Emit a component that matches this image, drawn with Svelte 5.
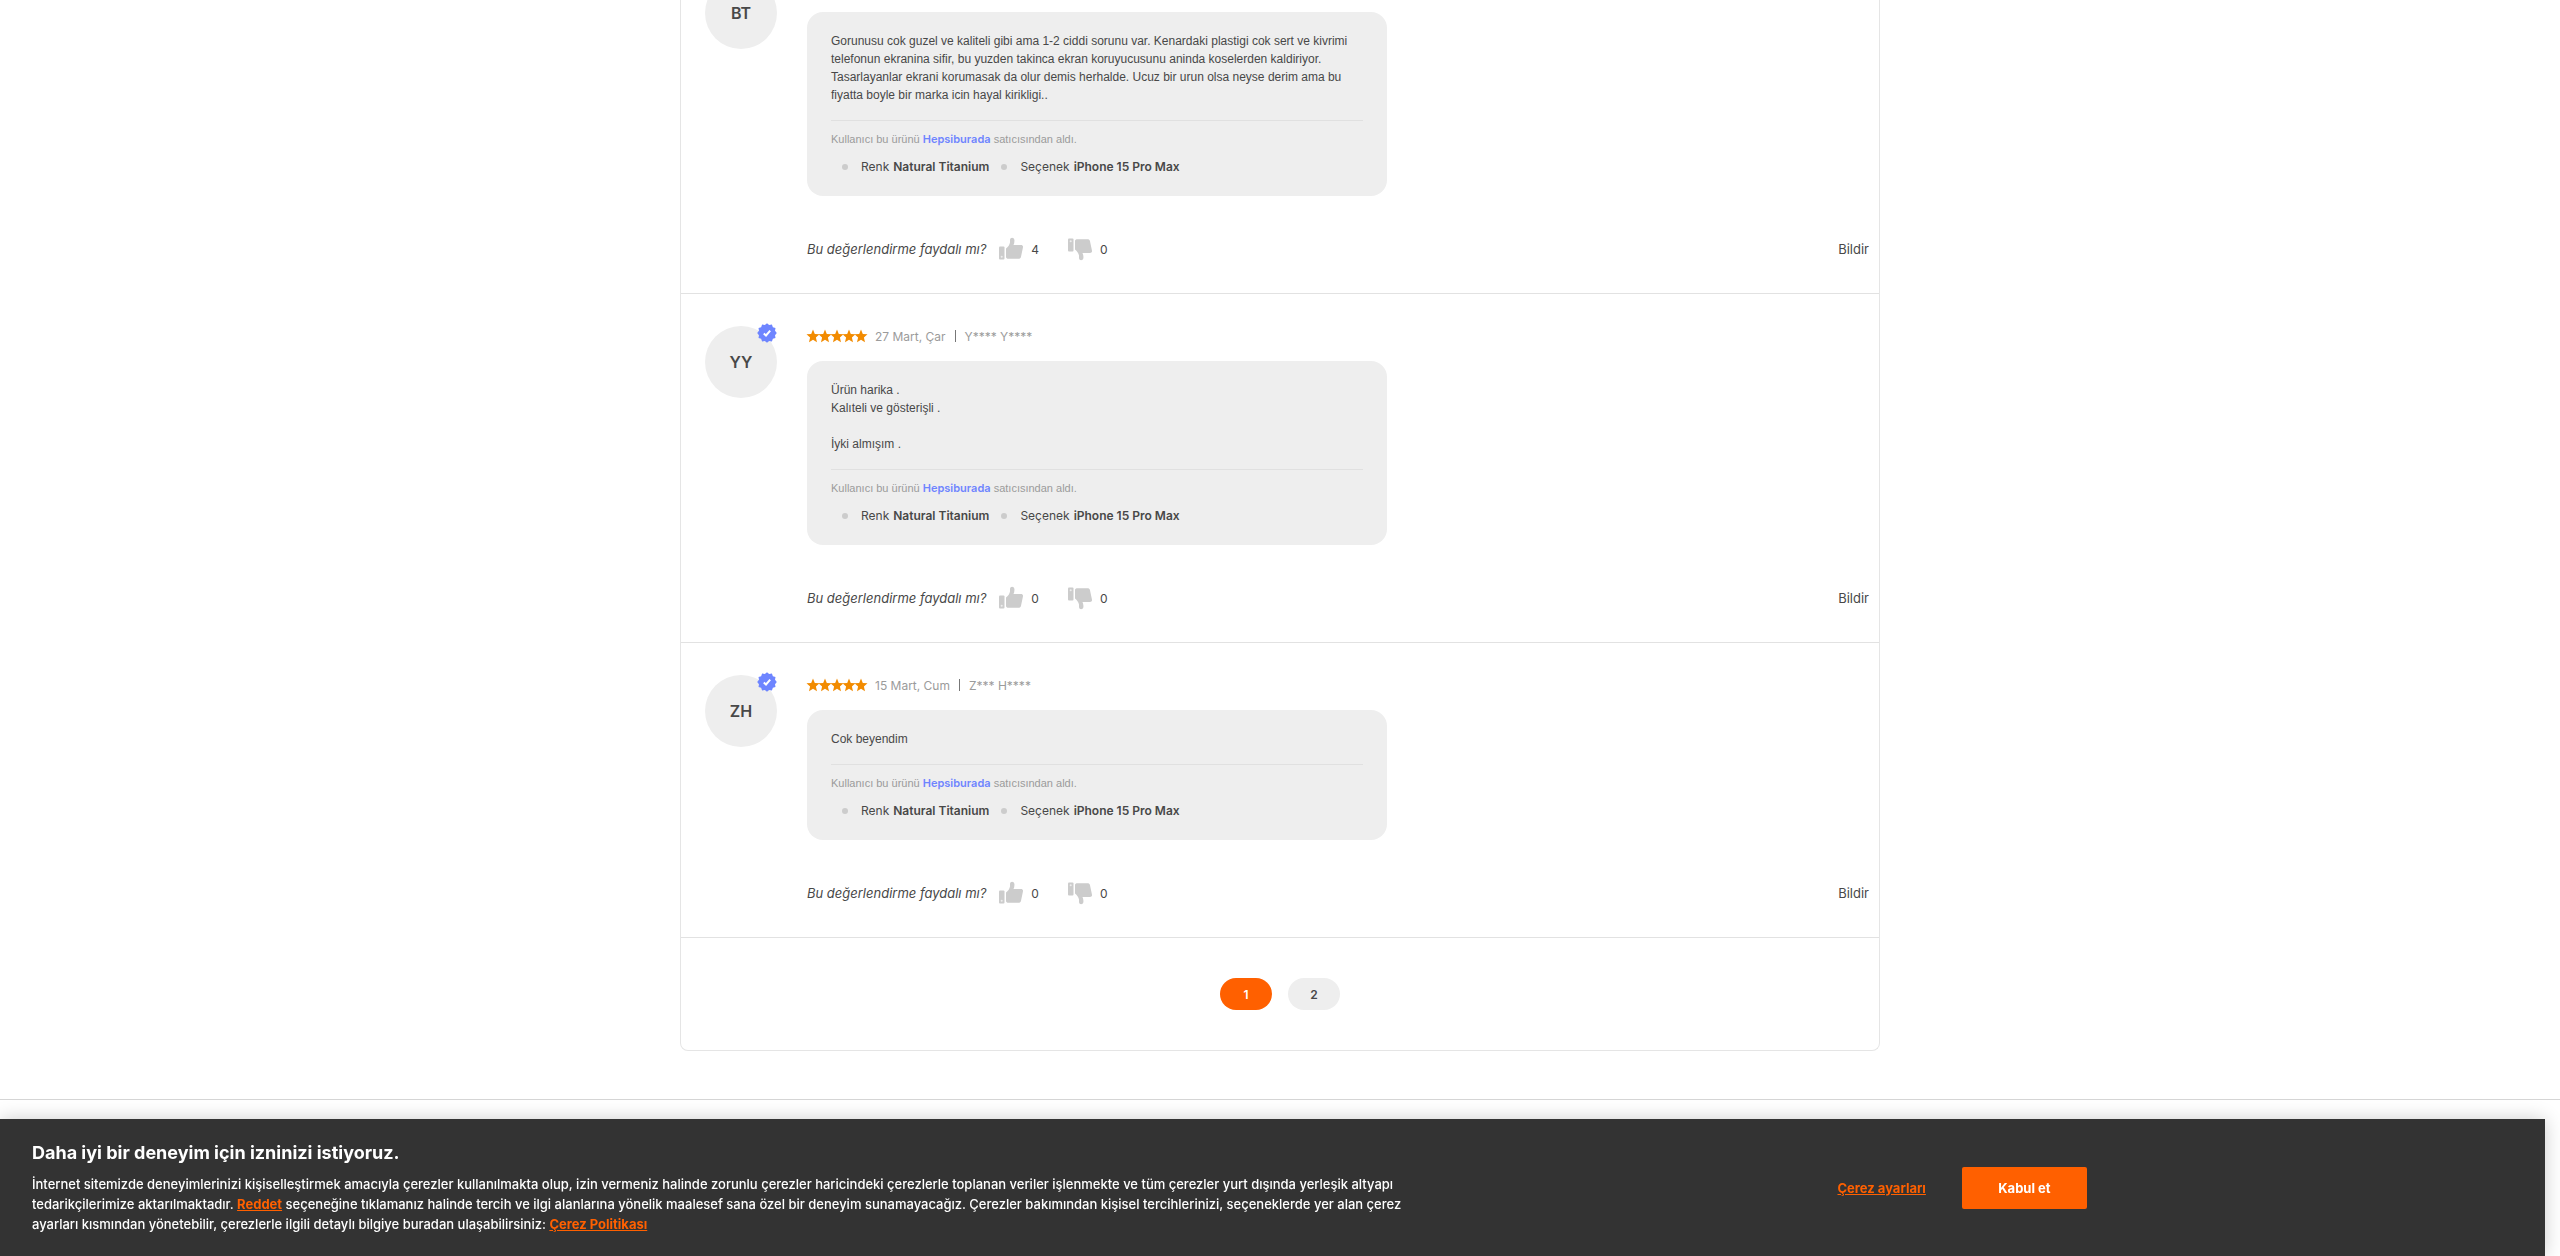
<script lang="ts">
  interface Review {
    initials: string;
    date?: string;
    author?: string;
    text: string;
    up: number;
    down: number;
  }

  const reviews: Review[] = [
    {
      initials: 'BT',
      text: 'Gorunusu cok guzel ve kaliteli gibi ama 1-2 ciddi sorunu var. Kenardaki plastigi cok sert ve kivrimi\ntelefonun ekranina sifir, bu yuzden takinca ekran koruyucusunu aninda koselerden kaldiriyor.\nTasarlayanlar ekrani korumasak da olur demis herhalde. Ucuz bir urun olsa neyse derim ama bu\nfiyatta boyle bir marka icin hayal kirikligi..',
      up: 4,
      down: 0,
    },
    {
      initials: 'YY',
      date: '27 Mart, Çar',
      author: 'Y**** Y****',
      text: 'Ürün harika .\nKalıteli ve gösterişli .\n\nİyki almışım .',
      up: 0,
      down: 0,
    },
    {
      initials: 'ZH',
      date: '15 Mart, Cum',
      author: 'Z*** H****',
      text: 'Cok beyendim',
      up: 0,
      down: 0,
    },
  ];

  const attributes = [
    { name: 'Renk', value: 'Natural Titanium' },
    { name: 'Seçenek', value: 'iPhone 15 Pro Max' },
  ];

  // Twelve-lobed seal outline, alternating outer and inner radius.
  const seal = Array.from({ length: 24 }, (_, i) => {
    const radius = i % 2 ? 8.3 : 9.8;
    const angle = (i * Math.PI) / 12;
    return `${(10 + radius * Math.sin(angle)).toFixed(2)},${(10 - radius * Math.cos(angle)).toFixed(2)}`;
  }).join(' ');

  let page = $state(1);
</script>

{#snippet star()}
  <svg class="star" viewBox="0 0 12 12" aria-hidden="true">
    <path d="M6-.5l1.800 4.400 4.700.4-3.600 3.100 1.100 4.800L6 9.700 2 12.200l1.100-4.800L-.5 4.300l4.700-.4z" />
  </svg>
{/snippet}

<main>
  <section class="card">
    {#each reviews as review}
      <article class="review">
        <div class="avatar">
          {review.initials}
          {#if review.date}
            <svg class="badge" viewBox="0 0 20 20" aria-hidden="true">
              <polygon class="seal" points={seal} />
              <path class="tick" d="M6.800 10.500l2.200 2 4.200-4.800" />
            </svg>
          {/if}
        </div>
        <div class="content">
          <header>
            {#if review.date}
              <span class="stars" role="img" aria-label="5 yıldız">
                {#each Array(5) as _}{@render star()}{/each}
              </span>
              <span>{review.date}</span>
              <span class="bar"></span>
              <span>{review.author}</span>
            {/if}
          </header>
          <div class="bubble">
            <p class="text">{review.text}</p>
            <p class="seller">Kullanıcı bu ürünü <a href="#hepsiburada">Hepsiburada</a> satıcısından aldı.</p>
            <ul>
              {#each attributes as attribute}
                <li>{attribute.name} <strong>{attribute.value}</strong></li>
              {/each}
            </ul>
          </div>
          <footer>
            <em>Bu değerlendirme faydalı mı?</em>
            <button class="vote" type="button" aria-label="Faydalı: {review.up}">
              <svg viewBox="0 0 24 24" aria-hidden="true">
                <path d="M1 9.500h3.500q1 0 1 1V21.500q0 1-1 1H1q-1 0-1-1V10.500q0-1 1-1z" />
                <circle class="hole" cx="2.700" cy="19.700" r="1" />
                <path d="M7 11.500C9 10 10.500 8 11 5.500V3C11.200 0 15 0 15.400 3c.2 2-.3 3.500-.9 5H22c1.500 0 2.200 1 2 2.300l-2 9.500c-.3 1.400-1.200 2-2.500 2H9.500C8 21.800 7 21.200 7 20z" />
              </svg>
              <span>{review.up}</span>
            </button>
            <button class="vote" type="button" aria-label="Faydalı değil: {review.down}">
              <svg viewBox="0 0 24 24" aria-hidden="true">
                <path d="M1 1.500h3.500q1 0 1 1V13.500q0 1-1 1H1q-1 0-1-1V2.500q0-1 1-1z" />
                <circle class="hole" cx="2.700" cy="4.300" r="1" />
                <path d="M7 12.500C9 14 10.500 16 11 18.500V21C11.200 24 15 24 15.400 21c.2-2-.3-3.500-.9-5H22c1.500 0 2.200-1 2-2.300L22 4.200c-.3-1.400-1.200-2-2.500-2H9.500C8 2.200 7 2.800 7 4z" />
              </svg>
              <span>{review.down}</span>
            </button>
            <button class="report" type="button">Bildir</button>
          </footer>
        </div>
      </article>
    {/each}
    <nav aria-label="Sayfalar">
      {#each [1, 2] as number}
        <button type="button" class:active={page === number} onclick={() => (page = number)}>{number}</button>
      {/each}
    </nav>
  </section>
  <hr />
</main>

<aside class="cookies" aria-labelledby="cookie-title">
  <div class="message">
    <h2 id="cookie-title">Daha iyi bir deneyim için izninizi istiyoruz.</h2>
    <p>
      İnternet sitemizde deneyimlerinizi kişiselleştirmek amacıyla çerezler kullanılmakta olup, izin vermeniz halinde
      zorunlu çerezler haricindeki çerezlerle toplanan veriler işlenmekte ve tüm çerezler yurt dışında yerleşik altyapı<br />
      tedarikçilerimize aktarılmaktadır. <a href="#reddet">Reddet</a> seçeneğine tıklamanız halinde tercih ve ilgi
      alanlarına yönelik maalesef sana özel bir deneyim sunamayacağız. Çerezler bakımından kişisel tercihlerinizi,
      seçeneklerde yer alan çerez<br />
      ayarları kısmından yönetebilir, çerezlerle ilgili detaylı bilgiye buradan ulaşabilirsiniz:
      <a href="#politika">Çerez Politikası</a>
    </p>
  </div>
  <div class="actions">
    <button class="settings" type="button">Çerez ayarları</button>
    <button class="accept" type="button">Kabul et</button>
  </div>
</aside>

<style>
  :global(body) {
    overflow: hidden;
    background: #fff;
  }
  main,
  .cookies {
    font-family: Inter, 'Liberation Sans', sans-serif;
    color: #484848;
  }
  main {
    display: flow-root;
  }
  p,
  h2,
  ul {
    margin: 0;
    padding: 0;
  }
  button {
    border: 0;
    padding: 0;
    background: none;
    color: inherit;
    font: inherit;
    cursor: pointer;
  }

  .card {
    box-sizing: border-box;
    max-width: 1200px;
    /* the list is scrolled past the first review's heading */
    margin: -55px auto 48px;
    border: 1px solid #e5e5e5;
    border-top: 0;
    border-radius: 0 0 8px 8px;
  }
  .review {
    display: flex;
    gap: 30px;
    padding: 32px 10px 32px 24px;
    border-bottom: 1px solid #e2e2e2;
  }
  .avatar {
    position: relative;
    flex: none;
    display: flex;
    align-items: center;
    justify-content: center;
    width: 72px;
    height: 72px;
    border-radius: 50%;
    background: #eee;
    font-size: 16px;
    font-weight: 600;
  }
  .badge {
    position: absolute;
    top: -3px;
    right: 0;
    width: 20px;
    height: 20px;
  }
  .seal {
    fill: #6e85ff;
  }
  .tick {
    fill: none;
    stroke: #fff;
    stroke-width: 2;
  }
  .content {
    flex: 1;
  }
  header {
    display: flex;
    align-items: center;
    gap: 9px;
    height: 20px;
    margin-bottom: 15px;
    color: #9b9b9b;
    font-size: 12px;
  }
  .stars {
    display: flex;
    margin-right: -1px;
  }
  .star {
    width: 12px;
    height: 12px;
    overflow: visible;
    fill: #f28b00;
  }
  .bar {
    width: 1px;
    height: 12px;
    background: #777;
  }
  .bubble {
    box-sizing: border-box;
    max-width: 580px;
    padding: 20px 24px;
    border-radius: 16px;
    background: #eee;
    font-size: 12px;
    line-height: 18px;
  }
  .text,
  .seller {
    font-family: 'Liberation Sans', Arial, sans-serif;
  }
  .text {
    padding-bottom: 16px;
    border-bottom: 1px solid #e0e0e0;
    white-space: pre-line;
  }
  .seller {
    padding: 9px 0 10px;
    color: #9b9b9b;
    font-size: 11px;
  }
  .seller a {
    color: #6e85ff;
    font-family: Inter, sans-serif;
    font-weight: 600;
    text-decoration: none;
  }
  ul {
    display: flex;
    padding-left: 11px;
    gap: 12px;
    list-style: none;
  }
  li {
    display: flex;
    align-items: center;
    gap: 4px;
  }
  li::before {
    content: '';
    width: 6px;
    height: 6px;
    margin-right: 9px;
    border-radius: 50%;
    background: #ccc;
  }
  strong {
    font-weight: 600;
  }
  footer {
    display: flex;
    align-items: center;
    height: 24px;
    margin-top: 41px;
    font-size: 13px;
  }
  .vote {
    display: flex;
    align-items: center;
    gap: 8px;
    margin-left: 13px;
    font-size: 12px;
  }
  .vote + .vote {
    margin-left: 29px;
  }
  .vote svg {
    width: 24px;
    height: 24px;
    fill: #ccc;
  }
  .vote .hole {
    fill: #eee;
  }
  .report {
    margin-left: auto;
    font-size: 13px;
  }
  nav {
    display: flex;
    justify-content: center;
    gap: 16px;
    padding: 40px 0;
  }
  nav button {
    width: 52px;
    height: 32px;
    border-radius: 16px;
    background: #eee;
    font-size: 12px;
    font-weight: 600;
  }
  nav .active {
    background: #ff6000;
    color: #fff;
  }
  hr {
    margin: 0;
    border: 0;
    border-top: 1px solid #d5d5d5;
  }

  .cookies {
    position: fixed;
    right: 15px;
    bottom: 0;
    left: 0;
    display: flex;
    box-sizing: border-box;
    padding: 22px 32px;
    background: #333;
    box-shadow: 0 0 18px rgba(0, 0, 0, 0.2);
    color: #fff;
  }
  .message {
    flex: 0 0 71%;
    margin-right: 44px;
  }
  h2 {
    margin-bottom: 10px;
    font-size: 18px;
    font-weight: 700;
    line-height: 23px;
  }
  .message p {
    font-size: 13px;
    font-weight: 500;
    line-height: 20px;
  }
  .message a {
    color: #ff6000;
    font-weight: 700;
  }
  .actions {
    display: flex;
    align-items: center;
    gap: 36px;
  }
  .settings {
    color: #ff6000;
    font-size: 13px;
    font-weight: 700;
    text-decoration: underline;
  }
  .accept {
    width: 125px;
    height: 42px;
    border-radius: 2px;
    background: #ff6000;
    font-size: 13px;
    font-weight: 700;
  }
</style>
